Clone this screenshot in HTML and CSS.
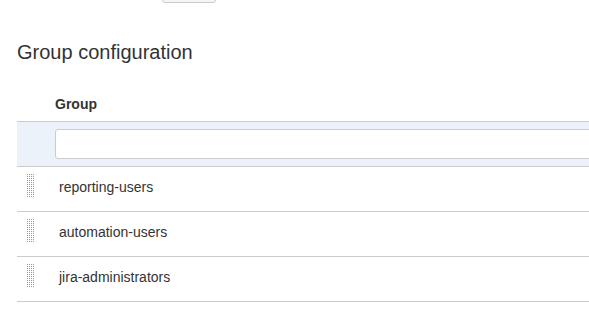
FILE: index.html
```html
<!DOCTYPE html>
<html lang="en">
<head>
  <meta charset="UTF-8" />
  <meta name="viewport" content="width=device-width, initial-scale=1.0" />
  <title>Group configuration</title>
  <link rel="stylesheet" href="styles.css">
</head>
<body>
  <div class="toolbar">
    <button class="aui-button" type="button" aria-label="Save"></button>
  </div>

  <h2 class="page-title">Group configuration</h2>

  <table class="groups">
    <thead>
      <tr>
        <th class="order"></th>
        <th>Group</th>
      </tr>
    </thead>
    <tbody class="create-row">
      <tr>
        <td class="order"></td>
        <td><input type="text" class="text" /></td>
      </tr>
    </tbody>
    <tbody>
      <tr>
        <td class="order"><span class="handle"></span></td>
        <td><span class="name">reporting-users</span></td>
      </tr>
      <tr>
        <td class="order"><span class="handle"></span></td>
        <td><span class="name">automation-users</span></td>
      </tr>
      <tr>
        <td class="order"><span class="handle"></span></td>
        <td><span class="name">jira-administrators</span></td>
      </tr>
    </tbody>
  </table>
</body>
</html>
```

FILE: styles.css
```css
html, body {
  overflow: hidden;
}
body {
  font-family: "Liberation Sans", Arial, sans-serif;
  font-size: 14px;
  line-height: 20px;
  margin: 0;
  padding: 0 0 0 17px;
  background: #fff;
  color: #333;
}
.toolbar {
  padding-left: 145px;
}
.aui-button {
  display: block;
  width: 54px;
  height: 30px;
  margin-top: -27px;
  background: #f5f5f5;
  border: 1px solid #ccc;
  border-radius: 3px;
}
.page-title {
  margin: 37px 0 0;
  font-size: 20px;
  line-height: 24px;
  font-weight: normal;
  color: #333;
}
.groups {
  width: 100%;
  margin-top: 23px;
  border-collapse: collapse;
  table-layout: fixed;
}
.groups th {
  text-align: left;
  font-weight: bold;
  padding: 7px 0;
  border-bottom: 1px solid #ccc;
}
.groups .order {
  width: 18px;
  padding-left: 10px;
  padding-right: 10px;
}
.groups td {
  padding: 10px 0 14px;
  border-bottom: 1px solid #ccc;
  vertical-align: top;
}
.groups td.order {
  padding-top: 7px;
  padding-bottom: 0;
}
.create-row td {
  background: #ebf2f9;
  padding: 7px 0;
}
.create-row td.order {
  padding: 7px 10px;
}
.create-row input {
  display: block;
  box-sizing: border-box;
  width: 600px;
  height: 30px;
  margin: 0;
  padding: 4px 6px;
  border: 1px solid #ccc;
  border-radius: 3px;
  background: #fff;
  font: inherit;
}
.handle {
  display: block;
  width: 8px;
  height: 24px;
  background-image: radial-gradient(circle at 0.5px 0.5px, #999 0.7px, transparent 0.8px);
  background-size: 2px 2px;
}
.name {
  padding-left: 4px;
}
```
